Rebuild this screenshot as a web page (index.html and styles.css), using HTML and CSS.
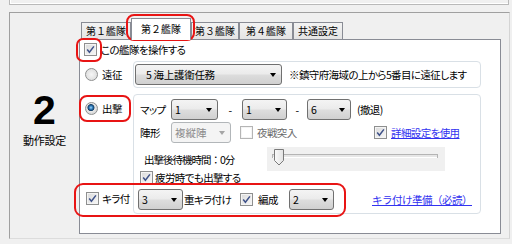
FILE: index.html
```html
<!DOCTYPE html>
<html lang="ja">
<head>
<meta charset="utf-8">
<link rel="stylesheet" href="styles.css">
</head>
<body>
<div class="top-panel"></div>
<div class="group">
  <div class="side">
    <div class="big">2</div>
    <div class="side-label">動作設定</div>
  </div>
  <div class="tabctl">
    <div class="tabs">
      <div class="tab t1">第１艦隊</div>
      <div class="tab sel">第２艦隊</div>
      <div class="tab t3">第３艦隊</div>
      <div class="tab t4">第４艦隊</div>
      <div class="tab t5">共通設定</div>
    </div>
    <div class="pane">
      <div class="row-op">
        <span class="cb"><svg viewBox="0 0 11 11" width="11" height="11"><path d="M2.2 5.6 L4.4 8.2 L8.9 2.4" fill="none" stroke="#3e5188" stroke-width="1.5"/></svg></span>
        <span class="lbl">この艦隊を操作する</span>
      </div>
      <div class="grid">
        <div class="opt opt-exp"><span class="radio"></span><span class="lbl">遠征</span></div>
        <div class="box box-exp">
          <div class="combo combo-exp"><span>5 海上護衛任務</span><span class="arrow"></span></div>
          <span class="note">※鎮守府海域の上から5番目に遠征します</span>
        </div>
        <div class="opt-col">
          <div class="opt opt-sortie"><span class="radio on"></span><span class="lbl">出撃</span></div>
          <div class="opt opt-kira">
            <span class="cb"><svg viewBox="0 0 11 11" width="11" height="11"><path d="M2.2 5.6 L4.4 8.2 L8.9 2.4" fill="none" stroke="#3e5188" stroke-width="1.5"/></svg></span>
            <span class="lbl">キラ付</span>
          </div>
        </div>
        <div class="box box-sortie">
          <div class="r r-map">
            <span class="rl">マップ</span>
            <div class="combo w47"><span>1</span><span class="arrow"></span></div>
            <span class="sep s24">-</span>
            <div class="combo w45"><span>1</span><span class="arrow"></span></div>
            <span class="sep s20">-</span>
            <div class="combo w44"><span>6</span><span class="arrow"></span></div>
            <span class="retreat">(撤退)</span>
          </div>
          <div class="r r-form">
            <span class="rl">陣形</span>
            <div class="combo dis w60"><span>複縦陣</span><span class="arrow"></span></div>
            <span class="cb plain night"></span>
            <span class="lbl dim night-lbl">夜戦突入</span>
            <span class="cb"><svg viewBox="0 0 11 11" width="11" height="11"><path d="M2.2 5.6 L4.4 8.2 L8.9 2.4" fill="none" stroke="#3e5188" stroke-width="1.5"/></svg></span>
            <span class="link detail-link">詳細設定を使用</span>
          </div>
          <div class="r r-wait">
            <span class="wait-text">出撃後待機時間：0分</span>
            <div class="track">
              <svg width="178" height="24" viewBox="0 0 178 24">
                <rect x="5.5" y="7.5" width="165" height="3" fill="#e6e6e6" stroke="#b4b4b4"/>
                <line x1="6" y1="10.5" x2="170" y2="10.5" stroke="#ffffff"/>
                <defs><linearGradient id="tg" x1="0" y1="0" x2="1" y2="0"><stop offset="0" stop-color="#fbfbfb"/><stop offset="1" stop-color="#e2e2e2"/></linearGradient></defs>
                <path d="M7.5 2.5 H16.5 V13.5 L12 18 L7.5 13.5 Z" fill="url(#tg)" stroke="#7a7a7a"/>
              </svg>
            </div>
          </div>
          <div class="r r-tired">
            <span class="cb"><svg viewBox="0 0 11 11" width="11" height="11"><path d="M2.2 5.6 L4.4 8.2 L8.9 2.4" fill="none" stroke="#3e5188" stroke-width="1.5"/></svg></span>
            <span class="lbl">疲労時でも出撃する</span>
          </div>
          <div class="r r-kira">
            <div class="combo w45 k3"><span>3</span><span class="arrow"></span></div>
            <span class="heavy">重キラ付け</span>
            <span class="cb"><svg viewBox="0 0 11 11" width="11" height="11"><path d="M2.2 5.6 L4.4 8.2 L8.9 2.4" fill="none" stroke="#3e5188" stroke-width="1.5"/></svg></span>
            <span class="lbl form-lbl">編成</span>
            <div class="combo w45"><span>2</span><span class="arrow"></span></div>
            <span class="link klink">キラ付け準備（必読）</span>
          </div>
        </div>
      </div>
    </div>
  </div>
</div>
<div class="mark mark-tab"></div>
<div class="mark mark-cb"></div>
<div class="mark mark-sortie"></div>
<div class="mark mark-kira"></div>
</body>
</html>
```

FILE: styles.css
```css
* { box-sizing: border-box; }
html, body { margin: 0; padding: 0; }
body {
  width: 512px;
  height: 244px;
  overflow: hidden;
  position: relative;
  background: #f0f0f0;
  font-family: "Noto Sans CJK JP", "Noto Sans", sans-serif;
  font-size: 10.5px;
  letter-spacing: -0.6px;
  line-height: 13px;
  color: #000;
  font-feature-settings: "palt" 1;
}
.top-panel {
  margin-left: 9px;
  width: 500px;
  height: 5px;
  border: 1px solid #b9b9b9;
  border-top: 0;
  box-shadow: inset 1px -1px 0 #ffffff;
}
.group {
  margin: 7px 0 0 9px;
  width: 501px;
  height: 227px;
  border: 1px solid;
  border-color: #a0a0a0 #d4d4d4 #dcdcdc #a0a0a0;
  display: flex;
}
.side {
  width: 69px;
  flex: none;
  padding-top: 77px;
  text-align: center;
}
.big {
  font-family: "Liberation Sans", Arial, sans-serif;
  font-weight: bold;
  font-size: 41px;
  line-height: 41px;
  letter-spacing: 0;
}
.side-label {
  margin-top: 2px;
  line-height: 14px;
  font-size: 11px;
  letter-spacing: -0.2px;
}
.tabctl {
  display: flex;
  flex-direction: column;
}
.tabs {
  height: 26px;
  display: flex;
  align-items: flex-end;
  padding-left: 2px;
}
.tab {
  height: 17px;
  border: 1px solid #898c95;
  border-bottom: 0;
  background: linear-gradient(#f3f3f3, #e4e4e4);
  text-align: center;
  line-height: 16px;
  font-size: 10px;
  letter-spacing: 0;
  font-feature-settings: normal;
  color: #000;
}
.t1 { width: 50px; }
.t3 { width: 48px; }
.t4 { width: 54px; }
.t5 { width: 50px; }
.tab.sel {
  width: 60px;
  height: 22px;
  margin-bottom: -1px;
  background: #ffffff;
  position: relative;
  z-index: 2;
  line-height: 20px;
}
.pane {
  width: 422px;
  height: 195px;
  border: 1px solid #898c95;
  background: #ffffff;
  padding-top: 3px;
}
.row-op {
  display: flex;
  align-items: center;
  height: 13px;
  margin-left: 4px;
}
.row-op .lbl { margin-left: 4px; }
.cb {
  width: 13px;
  height: 13px;
  flex: none;
  border: 1px solid #8e8f8f;
  background: linear-gradient(135deg, #dadada, #f8f8f8);
  box-shadow: inset 0 0 0 1px #f4f4f4;
  display: flex;
  align-items: center;
  justify-content: center;
}
.cb.plain { background: #ffffff; border-color: #b5b5b5; }
.radio {
  width: 13px;
  height: 13px;
  flex: none;
  border-radius: 50%;
  border: 1px solid #8e8f8f;
  background: radial-gradient(circle at 50% 50%, #f6f6f6 0, #dedede 6px);
}
.radio.on {
  background: radial-gradient(circle at 45% 42%, #a9dcf8 0, #3382c4 1.6px, #143d63 3.1px, #e8e8e8 3.9px, #dadada 6px);
}
.grid {
  margin-top: 5px;
  display: grid;
  grid-template-columns: 53px 348px;
  row-gap: 6px;
}
.opt {
  display: flex;
  align-items: center;
}
.opt .lbl { margin-left: 4px; }
.opt-exp { padding-left: 5px; }
.opt-col {
  display: flex;
  flex-direction: column;
}
.opt-sortie { padding-left: 5px; margin-top: 8px; height: 13px; }
.opt-kira { padding-left: 6px; margin-top: auto; margin-bottom: 9px; height: 13px; }
.opt-kira .lbl { margin-left: 3px; }
.box {
  border: 1px solid #d9e0e6;
  border-radius: 4px;
  background: #ffffff;
}
.box-exp {
  height: 27px;
  display: flex;
  align-items: center;
  padding-left: 1px;
}
.combo {
  height: 21px;
  flex: none;
  border: 1px solid #707070;
  border-radius: 3px;
  background: linear-gradient(#f4f4f4 0%, #ebebeb 48%, #dddddd 52%, #d0d0d0 100%);
  display: flex;
  align-items: center;
  justify-content: space-between;
  padding: 0 5px 0 3px;
  letter-spacing: 0;
}
.arrow {
  width: 0;
  height: 0;
  border-left: 3.5px solid transparent;
  border-right: 3.5px solid transparent;
  border-top: 4px solid #000;
}
.combo-exp { width: 147px; padding-left: 10px; letter-spacing: -0.3px; }
.note { margin-left: 7px; }
.combo.dis {
  border-color: #b2b6b9;
  background: #f4f4f4;
  color: #8a8a8a;
}
.combo.dis .arrow { border-top-color: #a5a5a5; }
.w47 { width: 47px; }
.w45 { width: 45px; }
.w44 { width: 44px; }
.w60 { width: 60px; }
.box-sortie {
  height: 120px;
  display: flex;
  flex-direction: column;
}
.r {
  display: flex;
  align-items: center;
}
.rl { width: 37px; padding-left: 6px; flex: none; }
.r-map { margin-top: 4px; height: 21px; }
.sep { text-align: center; flex: none; }
.s24 { width: 24px; }
.s20 { width: 20px; }
.retreat { margin-left: 6px; }
.r-form { margin-top: 2px; height: 21px; }
.night { margin-left: 9px; }
.night-lbl { margin-left: 4px; width: 117px; flex: none; }
.dim { color: #6a6a6a; }
.detail-link { margin-left: 4px; }
.link { color: #3232f0; text-decoration: underline; }
.r-wait { margin-top: 4px; height: 24px; }
.wait-text { padding-left: 10px; width: 133px; flex: none; font-feature-settings: normal; letter-spacing: -1px; }
.track { width: 178px; height: 24px; background: #f0f0f0; flex: none; }
.track svg { display: block; }
.r-tired { height: 13px; padding-left: 6px; }
.r-tired .lbl { margin-left: 2px; }
.r-kira { margin-top: 5px; height: 21px; }
.k3 { margin-left: 4px; }
.heavy { margin-left: 1px; width: 56px; flex: none; }
.form-lbl { margin-left: 5px; width: 31px; flex: none; }
.klink { margin-left: 38px; font-feature-settings: normal; letter-spacing: -0.5px; }
.mark {
  position: absolute;
  border: 2px solid #e81414;
  border-radius: 8px;
}
.mark-tab { left: 126px; top: 14px; width: 69px; height: 27px; }
.mark-cb { left: 76px; top: 38px; width: 26px; height: 24px; border-radius: 7px; }
.mark-sortie { left: 79px; top: 95px; width: 52px; height: 27px; }
.mark-kira { left: 74px; top: 183px; width: 272px; height: 34px; border-radius: 9px; }
```
